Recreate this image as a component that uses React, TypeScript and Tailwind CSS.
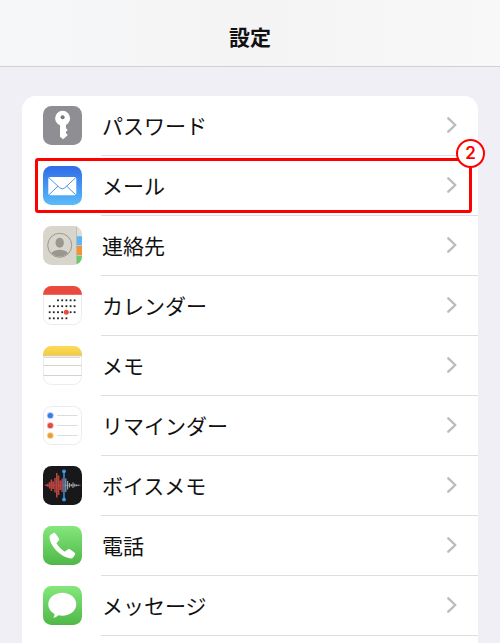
import type { ReactNode } from "react";

function IconBox({ children }: { children: ReactNode }) {
  return (
    <svg viewBox="0 0 39 39" className="mb-px size-[39px] shrink-0" aria-hidden="true">
      {children}
    </svg>
  );
}

function PasswordIcon() {
  return (
    <IconBox>
      <rect width="39" height="39" rx="8.5" fill="#8e8e93" />
      <circle cx="19.6" cy="12.2" r="7.5" fill="#fff" />
      <path
        fill="#fff"
        d="M17 18h6v4.2l1.8 1.7-1.8 1.9v1.4l1.8 1.7-1.8 1.9-2.9 2.4-3.1-2.400Z"
      />
      <circle cx="19.600" cy="11.300" r="2" fill="#77777c" />
    </IconBox>
  );
}

function MailIcon() {
  return (
    <IconBox>
      <defs>
        <linearGradient id="mail-bg" x1="0" y1="0" x2="0" y2="1">
          <stop offset="0" stopColor="#2f6be8" />
          <stop offset="1" stopColor="#5bbcf8" />
        </linearGradient>
      </defs>
      <rect width="39" height="39" rx="8.5" fill="url(#mail-bg)" />
      <rect x="5.3" y="11" width="28" height="18.3" rx="1.8" fill="#fff" />
      <path
        d="M6 11.8 16.7 21.8q2.6 2.2 5.2 0L32.6 11.8M6 28.7l9-8.6M32.6 28.7l-9-8.6"
        fill="none"
        stroke="#4b96ee"
        strokeWidth="1"
      />
    </IconBox>
  );
}

function ContactsIcon() {
  return (
    <IconBox>
      <defs>
        <clipPath id="contacts-clip">
          <rect width="39" height="39" rx="8.5" />
        </clipPath>
        <clipPath id="contacts-face">
          <circle cx="16.7" cy="19.3" r="11.4" />
        </clipPath>
      </defs>
      <g clipPath="url(#contacts-clip)">
        <rect width="39" height="39" fill="#d8d6cc" />
        <rect x="33.5" width="6" height="9.7" fill="#dfddd4" />
        <rect x="33.5" y="10.3" width="6" height="9" fill="#5cb5f5" />
        <rect x="33.5" y="20" width="6" height="9" fill="#f49237" />
        <rect x="33.5" y="29.7" width="6" height="9.3" fill="#68cc6a" />
        <path d="M33.5 0v39" stroke="#b9b7ad" strokeWidth="0.8" />
      </g>
      <g clipPath="url(#contacts-face)" fill="#99978e">
        <ellipse cx="16.7" cy="16.8" rx="4.2" ry="5" />
        <ellipse cx="16.7" cy="30" rx="9.5" ry="6.2" />
      </g>
      <circle cx="16.7" cy="19.3" r="12" fill="none" stroke="#99978e" strokeWidth="1" />
    </IconBox>
  );
}

const calendarDots = [
  { y: 14.3, xs: [15, 19.2, 23.4, 27.6, 31.6] },
  { y: 20.2, xs: [6.7, 10.8, 15, 19.2, 23.4, 27.6, 31.6] },
  { y: 26.2, xs: [6.7, 10.8, 15, 19.2, 27.6, 31.6] },
  { y: 32.3, xs: [6.7, 10.8, 15, 19.2, 23.4] },
];

function CalendarIcon() {
  return (
    <IconBox>
      <defs>
        <clipPath id="calendar-clip">
          <rect width="39" height="39" rx="8.5" />
        </clipPath>
      </defs>
      <rect x="0.5" y="0.5" width="38" height="38" rx="8" fill="#fff" stroke="#ececec" />
      <rect width="39" height="8.8" fill="#ea4a3d" clipPath="url(#calendar-clip)" />
      {calendarDots.map((line) =>
        line.xs.map((x) => (
          <rect key={`${x}-${line.y}`} x={x - 0.9} y={line.y - 0.9} width="1.8" height="1.8" fill="#222" />
        ))
      )}
      <circle cx="23.3" cy="26.2" r="2.5" fill="#ea4a3d" />
    </IconBox>
  );
}

function NotesIcon() {
  return (
    <IconBox>
      <defs>
        <clipPath id="notes-clip">
          <rect width="39" height="39" rx="8.5" />
        </clipPath>
        <linearGradient id="notes-top" x1="0" y1="0" x2="0" y2="1">
          <stop offset="0" stopColor="#fbdb5c" />
          <stop offset="1" stopColor="#f5cb3c" />
        </linearGradient>
      </defs>
      <rect x="0.5" y="0.5" width="38" height="38" rx="8" fill="#fff" stroke="#ececec" />
      <rect width="39" height="9.3" fill="url(#notes-top)" clipPath="url(#notes-clip)" />
      <path d="M0 9.8h39" stroke="#c9b98a" strokeWidth="0.9" />
      <path d="M1.5 11.5h36" stroke="#a8a8a8" strokeWidth="1.2" strokeDasharray="0.8 1.2" />
      <path d="M0.5 19.5h38M0.5 29.5h38" stroke="#d2d2d2" strokeWidth="1" />
    </IconBox>
  );
}

const reminderDots = [
  { y: 9.5, fill: "#3b7bea", ring: "#b9d0f8" },
  { y: 19.5, fill: "#dd4b43", ring: "#f3bfbc" },
  { y: 29.5, fill: "#eaa03a", ring: "#f8dcb4" },
];

function RemindersIcon() {
  return (
    <IconBox>
      <rect x="0.5" y="0.5" width="38" height="38" rx="8" fill="#fff" stroke="#ececec" />
      {reminderDots.map((dot) => (
        <g key={dot.y}>
          <circle cx="7.3" cy={dot.y} r="3.5" fill={dot.ring} />
          <circle cx="7.3" cy={dot.y} r="2.6" fill={dot.fill} />
          <path d={`M14 ${dot.y}h20.5`} stroke="#dcdcdc" strokeWidth="1" />
        </g>
      ))}
    </IconBox>
  );
}

function VoiceMemoIcon() {
  return (
    <IconBox>
      <rect width="39" height="39" rx="8.5" fill="#18181a" />
      <path d="M1.5 19.3H21" stroke="#8d4340" strokeWidth="0.8" />
      <path d="M21 19.3h16.500" stroke="#8a8a8a" strokeWidth="0.8" />
      <path
        d="M3 18.6v1.4M4.8 17.8v3M6.6 16v6.6M8.4 13.5v11.6M10.2 15.5v7.6M12 12v14.6M13.8 7v24.6M15.6 9.5v19.6M17.4 14.5v9.6M19.2 12.5v13.6"
        stroke="#b8443f"
        strokeWidth="1.6"
      />
      <path
        d="M22.8 12.5v13.6M24.6 15v8.6M26.4 17v4.6M28.2 18v2.6M30 16.5v5.6M31.8 17.8v3M33.6 18.4v1.8M35.4 18.8v1"
        stroke="#aaa"
        strokeWidth="1.1"
      />
      <path d="M21 5.3v28" stroke="#3a9af0" strokeWidth="1.4" />
      <circle cx="21" cy="5.3" r="1.9" fill="#3a9af0" />
      <circle cx="21" cy="33.5" r="1.9" fill="#3a9af0" />
    </IconBox>
  );
}

function PhoneIcon() {
  return (
    <IconBox>
      <defs>
        <linearGradient id="phone-bg" x1="0" y1="0" x2="0" y2="1">
          <stop offset="0" stopColor="#84e77c" />
          <stop offset="1" stopColor="#4fb748" />
        </linearGradient>
      </defs>
      <rect width="39" height="39" rx="8.5" fill="url(#phone-bg)" />
      <path
        fill="#fff"
        d="M7.6 8.8 10 7.2c1-.6 2-.4 2.7.5l3.1 4.5c.6.9.5 1.8-.2 2.6l-1.6 1.6c-.5.5-.5 1-.1 1.7 1.9 3 4.2 5.3 7.2 7.1.7.4 1.2.4 1.7-.1l1.8-1.5c.8-.6 1.7-.7 2.6-.1l4.2 2.9c.9.7 1.1 1.7.4 2.7l-1.5 2.1c-1.1 1.3-2.7 1.5-4.7.9C16.500 29.300 9.400 22 6.900 13.900c-.7-2-.6-3.900.7-5.100Z"
      />
    </IconBox>
  );
}

function MessageIcon() {
  return (
    <IconBox>
      <defs>
        <linearGradient id="message-bg" x1="0" y1="0" x2="0" y2="1">
          <stop offset="0" stopColor="#84e77c" />
          <stop offset="1" stopColor="#4fb748" />
        </linearGradient>
      </defs>
      <rect width="39" height="39" rx="8.5" fill="url(#message-bg)" />
      <path
        fill="#fff"
        d="M19.3 6.8c7.8 0 14 5.1 14 11.5s-6.2 11.5-14 11.5c-1.4 0-2.7-.2-3.9-.5-1.5 1.5-3.3 2.4-5.3 2.6 1-1.2 1.5-2.6 1.3-4.1C7.6 25.7 5.3 22.3 5.3 18.3c0-6.4 6.2-11.5 14-11.5Z"
      />
    </IconBox>
  );
}

function Chevron() {
  return (
    <svg viewBox="0 0 10 16" className="mb-px h-4 w-[10px] shrink-0" aria-hidden="true">
      <path
        d="M1.3 1.3 8.3 8l-7 6.700"
        fill="none"
        stroke="#bcbcbe"
        strokeWidth="2.4"
        strokeLinecap="round"
        strokeLinejoin="round"
      />
    </svg>
  );
}

const items = [
  { label: "パスワード", icon: <PasswordIcon /> },
  { label: "メール", icon: <MailIcon />, step: 2 },
  { label: "連絡先", icon: <ContactsIcon /> },
  { label: "カレンダー", icon: <CalendarIcon /> },
  { label: "メモ", icon: <NotesIcon /> },
  { label: "リマインダー", icon: <RemindersIcon /> },
  { label: "ボイスメモ", icon: <VoiceMemoIcon /> },
  { label: "電話", icon: <PhoneIcon /> },
  { label: "メッセージ", icon: <MessageIcon /> },
];

export default function App() {
  return (
    <main className="flex min-h-screen flex-col bg-[#f0eff5] font-['Noto_Sans_CJK_JP',sans-serif] text-[#111]">
      {/* HEADER */}
      <header className="border-b border-[#d0d0d3] bg-linear-to-r from-[#f6f7f9] via-[#f4f4f4] to-[#f8f8f9] pt-5 pb-[14px]">
        <h1 className="text-center text-[21px] leading-8 font-bold">設定</h1>
      </header>

      {/* SETTINGS LIST */}
      <nav className="flex flex-1 flex-col px-[22px] pt-[29px]">
        <ul className="flex-1 rounded-t-[14px] bg-white">
          {items.map((item) => (
            <li key={item.label} className="relative">
              <a href="#" className="flex items-center pl-[21px]">
                {item.icon}
                <span className="ml-[19px] flex h-15 flex-1 items-center justify-between border-b border-[#dedee1] pr-[21px] pl-px">
                  <span className="pb-0.5 text-[21px] leading-8">{item.label}</span>
                  <Chevron />
                </span>
              </a>

              {/* step marker */}
              {item.step && (
                <div className="pointer-events-none absolute top-0.5 right-1.5 bottom-[3px] left-[13px] rounded-[3px] border-3 border-[#fe0000]">
                  <span className="absolute -top-[22px] -right-4 flex size-[29px] items-center justify-center rounded-full border-2 border-[#fe0000] bg-white font-['Inter',sans-serif] text-[17px] leading-none font-semibold text-[#fe0000]">
                    {item.step}
                  </span>
                </div>
              )}
            </li>
          ))}
        </ul>
      </nav>
    </main>
  );
}
